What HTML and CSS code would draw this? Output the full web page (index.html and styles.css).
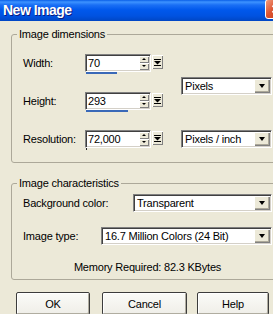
FILE: index.html
```html
<!DOCTYPE html>
<html lang="en">
<head>
    <meta charset="UTF-8">
    <meta name="viewport" content="width=device-width, initial-scale=1.0">
    <title>New Image</title>
  <link rel="stylesheet" href="styles.css">
</head>
<body>
<div class="window">
    <div class="titlebar">
        <span class="title">New Image</span>
        <span class="close">
            <svg width="10" height="10" viewBox="0 0 10 10"><path d="M1.5 1.5L8.5 8.5M8.5 1.5L1.5 8.5" stroke="#fff" stroke-width="2" fill="none"/></svg>
        </span>
    </div>

    <fieldset class="group group-dims">
        <legend>Image dimensions</legend>
        <div class="dims">
            <span class="lbl row1">Width:</span>
            <div class="field row1">
                <div class="edit">
                    <span class="value">70</span>
                    <span class="spin"><i class="spin-up"></i><i class="spin-down"></i></span>
                </div>
                <div class="track"><div class="fill" style="width: 31px"></div></div>
            </div>
            <span class="slider-btn row1">
                <svg width="7" height="7" viewBox="0 0 7 7"><rect x="0" y="0" width="7" height="1"/><polygon points="0,2 7,2 3.5,5.5"/><rect x="0" y="6" width="7" height="1"/></svg>
            </span>

            <span class="lbl row2">Height:</span>
            <div class="field row2">
                <div class="edit">
                    <span class="value">293</span>
                    <span class="spin"><i class="spin-up"></i><i class="spin-down"></i></span>
                </div>
                <div class="track"><div class="fill" style="width: 42px"></div></div>
            </div>
            <span class="slider-btn row2">
                <svg width="7" height="7" viewBox="0 0 7 7"><rect x="0" y="0" width="7" height="1"/><polygon points="0,2 7,2 3.5,5.5"/><rect x="0" y="6" width="7" height="1"/></svg>
            </span>

            <span class="lbl row3">Resolution:</span>
            <div class="field row3">
                <div class="edit">
                    <span class="value">72,000</span>
                    <span class="spin"><i class="spin-up"></i><i class="spin-down"></i></span>
                </div>
                <div class="track"><div class="fill" style="width: 1px"></div></div>
            </div>
            <span class="slider-btn row3">
                <svg width="7" height="7" viewBox="0 0 7 7"><rect x="0" y="0" width="7" height="1"/><polygon points="0,2 7,2 3.5,5.5"/><rect x="0" y="6" width="7" height="1"/></svg>
            </span>

            <div class="combo unit-size">
                <span class="combo-text">Pixels</span>
                <span class="combo-btn"><i class="arrow"></i></span>
            </div>
            <div class="combo unit-res">
                <span class="combo-text">Pixels / inch</span>
                <span class="combo-btn"><i class="arrow"></i></span>
            </div>
        </div>
    </fieldset>

    <fieldset class="group group-chars">
        <legend>Image characteristics</legend>
        <div class="chars-row">
            <span class="lbl">Background color:</span>
            <div class="combo combo-bg">
                <span class="combo-text">Transparent</span>
                <span class="combo-btn"><i class="arrow"></i></span>
            </div>
        </div>
        <div class="chars-row">
            <span class="lbl">Image type:</span>
            <div class="combo combo-type">
                <span class="combo-text">16.7 Million Colors (24 Bit)</span>
                <span class="combo-btn"><i class="arrow"></i></span>
            </div>
        </div>
        <p class="memory">Memory Required: 82.3 KBytes</p>
    </fieldset>

    <div class="buttons">
        <span class="btn btn-ok">OK</span>
        <span class="btn btn-cancel">Cancel</span>
        <span class="btn btn-help">Help</span>
    </div>
</div>
</body>
</html>
```

FILE: styles.css
```css
* {
  box-sizing: border-box;
  margin: 0;
  padding: 0;
}

body {
  --face: #ECE9D8;
  --shadow: #808080;
  --dark: #404040;
  --light: #ffffff;

  background: var(--face);
  font-family: "Liberation Sans", Arial, sans-serif;
  font-size: 11px;
  letter-spacing: -0.2px;
  color: #000;
  width: 273px;
  height: 314px;
  overflow: hidden;
}

.window {
  width: 292px;
}

/* barra de titulo */
.titlebar {
  height: 21px;
  display: flex;
  justify-content: space-between;
  align-items: flex-start;
  background: linear-gradient(to bottom, #0a5fe8 0px, #3d93ff 2px, #1a6ff5 5px, #0058ec 10px, #0052e0 16px, #0046c4 21px);
}

.title {
  color: #fff;
  font-weight: bold;
  font-size: 14px;
  letter-spacing: -0.5px;
  line-height: 20px;
  padding-left: 3px;
  text-shadow: 1px 1px #0a1a80;
}

.close {
  width: 21px;
  height: 20px;
  margin: -1px 6px 0 0;
  border: 1px solid #fff;
  border-radius: 3px;
  background: linear-gradient(135deg, #f39a7c, #dc5330 45%, #c23c1a);
  display: flex;
  align-items: center;
  justify-content: center;
}

/* grupos */
.group {
  margin: 7px 11px 0;
  border: 1px solid #aca899;
  border-radius: 3px;
  padding: 0 8px 12px 11px;
  min-width: 0;
}

.group legend {
  margin-left: -6px;
  padding: 0 2px;
  line-height: 13px;
}

.group-chars {
  margin-top: 14px;
  padding-bottom: 5px;
}

.dims {
  display: grid;
  grid-template-columns: 62px 67px 11px auto;
  grid-template-rows: 20px 20px 20px;
  row-gap: 18px;
  padding-top: 13px;
}

.row1 { grid-row: 1; }
.row2 { grid-row: 2; }
.row3 { grid-row: 3; }

.lbl {
  line-height: 18px;
  white-space: nowrap;
}

.edit {
  width: 66px;
  height: 18px;
  display: flex;
  background: #fff;
  border: 1px solid;
  border-color: var(--shadow) var(--light) var(--light) var(--shadow);
  box-shadow: inset 1px 1px var(--dark), inset -1px -1px #d4d0c8;
  padding: 1px;
}

.value {
  flex: 1;
  padding-left: 1px;
  line-height: 14px;
}

.spin {
  width: 10px;
  display: flex;
  flex-direction: column;
}

.spin i {
  flex: 1;
  display: block;
  background: var(--face);
  box-shadow: inset 1px 1px var(--light), inset -1px -1px var(--shadow);
  position: relative;
}

.spin i::after {
  content: "";
  position: absolute;
  left: 3px;
  top: 2px;
  border-left: 2px solid transparent;
  border-right: 2px solid transparent;
}

.spin-up::after {
  border-bottom: 2px solid #000;
}

.spin-down::after {
  border-top: 2px solid #000;
}

.track {
  height: 2px;
  margin-left: 1px;
}

.fill {
  height: 2px;
  background: #3a69b8;
}

.row3 .fill {
  background: #222;
}

.slider-btn {
  width: 11px;
  height: 14px;
  margin-top: 1px;
  align-self: start;
  background: var(--face);
  box-shadow: inset 1px 1px var(--light), inset -1px -1px var(--shadow);
  display: flex;
  align-items: center;
  justify-content: center;
}

/* combos */
.combo {
  height: 18px;
  display: flex;
  background: #fff;
  border: 1px solid;
  border-color: var(--shadow) var(--light) var(--light) var(--shadow);
  box-shadow: inset 1px 1px var(--dark), inset -1px -1px #d4d0c8;
  padding: 1px;
}

.combo-text {
  flex: 1;
  padding-left: 2px;
  line-height: 14px;
  white-space: nowrap;
  overflow: hidden;
}

.combo-btn {
  width: 16px;
  background: var(--face);
  box-shadow: inset 1px 1px var(--light), inset -1px -1px var(--shadow), inset -2px -2px #aca899;
  display: flex;
  align-items: center;
  justify-content: center;
}

.arrow {
  border-left: 3.5px solid transparent;
  border-right: 3.5px solid transparent;
  border-top: 4px solid #000;
}

.unit-size {
  grid-column: 4;
  grid-row: 1 / 3;
  align-self: start;
  margin: 23px 0 0 18px;
}

.unit-res {
  grid-column: 4;
  grid-row: 3;
  align-self: start;
  margin-left: 18px;
}

.chars-row {
  display: flex;
  align-items: center;
  justify-content: space-between;
  padding-top: 4px;
}

.chars-row + .chars-row {
  padding-top: 15px;
}

.combo-bg {
  width: 139px;
}

.combo-type {
  width: 171px;
}

.memory {
  text-align: center;
  line-height: 13px;
  margin-top: 16px;
}

/* botones */
.buttons {
  display: flex;
  padding: 12px 0 0 16px;
}

.btn {
  height: 23px;
  display: flex;
  align-items: center;
  justify-content: center;
  border: 1px solid #3c3c3c;
  border-radius: 2px;
  background: linear-gradient(#fbfbf8, #efeee8);
  box-shadow: inset 1px 1px var(--light), inset -1px -1px #b0ada0;
}

.btn-ok { width: 74px; }
.btn-cancel { width: 85px; margin-left: 12px; }
.btn-help { width: 72px; margin-left: 10px; }
```
